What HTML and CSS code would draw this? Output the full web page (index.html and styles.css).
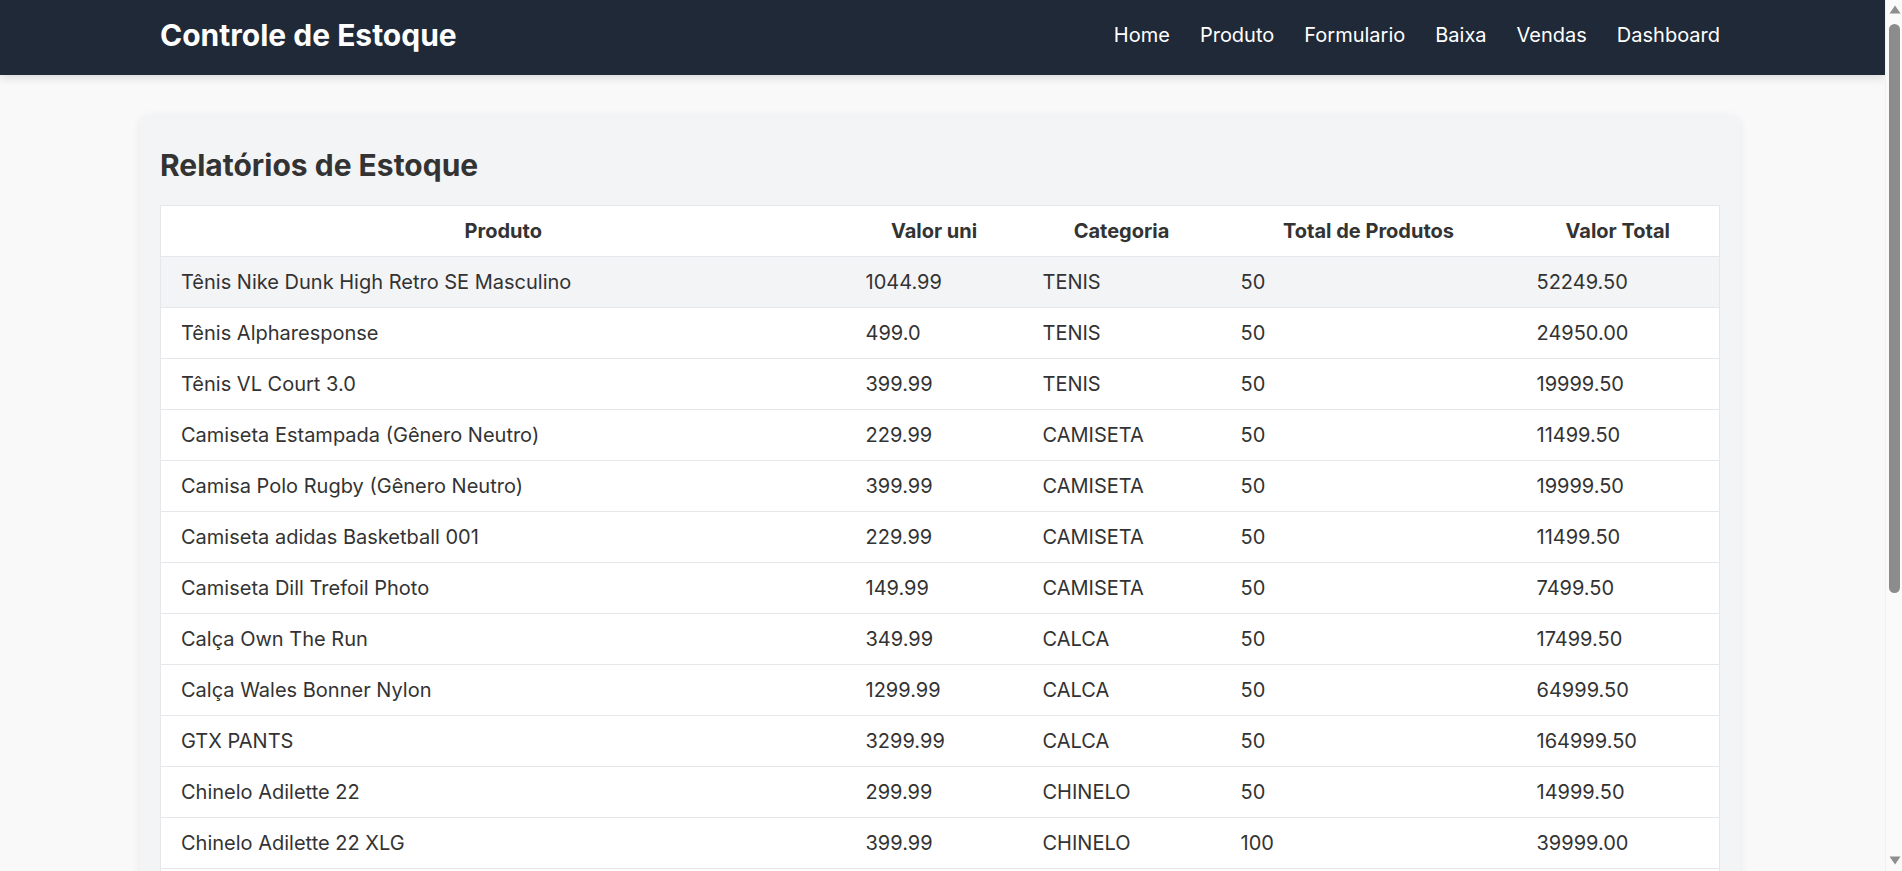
FILE: index.html
```html
<!DOCTYPE html>
<html lang="pt-BR">
<head>
<meta charset="utf-8">
<title>Relatórios de Estoque</title>
<link rel="stylesheet" href="styles.css">
</head>
<body>
<header class="topbar">
  <div class="topbar-inner">
    <h1 class="brand">Controle de Estoque</h1>
    <nav class="nav">
      <a href="#">Home</a>
      <a href="#">Produto</a>
      <a href="#">Formulario</a>
      <a href="#">Baixa</a>
      <a href="#">Vendas</a>
      <a href="#">Dashboard</a>
    </nav>
  </div>
</header>
<div class="page">
  <main class="card">
    <h2 class="card-title">Relatórios de Estoque</h2>
    <table class="report">
      <colgroup>
        <col class="c-prod"><col class="c-uni"><col class="c-cat"><col class="c-qtd"><col class="c-total">
      </colgroup>
      <thead>
        <tr><th>Produto</th><th>Valor uni</th><th>Categoria</th><th>Total de Produtos</th><th>Valor Total</th></tr>
      </thead>
      <tbody>
        <tr class="hover"><td>Tênis Nike Dunk High Retro SE Masculino</td><td>1044.99</td><td>TENIS</td><td>50</td><td>52249.50</td></tr>
        <tr><td>Tênis Alpharesponse</td><td>499.0</td><td>TENIS</td><td>50</td><td>24950.00</td></tr>
        <tr><td>Tênis VL Court 3.0</td><td>399.99</td><td>TENIS</td><td>50</td><td>19999.50</td></tr>
        <tr><td>Camiseta Estampada (Gênero Neutro)</td><td>229.99</td><td>CAMISETA</td><td>50</td><td>11499.50</td></tr>
        <tr><td>Camisa Polo Rugby (Gênero Neutro)</td><td>399.99</td><td>CAMISETA</td><td>50</td><td>19999.50</td></tr>
        <tr><td>Camiseta adidas Basketball 001</td><td>229.99</td><td>CAMISETA</td><td>50</td><td>11499.50</td></tr>
        <tr><td>Camiseta Dill Trefoil Photo</td><td>149.99</td><td>CAMISETA</td><td>50</td><td>7499.50</td></tr>
        <tr><td>Calça Own The Run</td><td>349.99</td><td>CALCA</td><td>50</td><td>17499.50</td></tr>
        <tr><td>Calça Wales Bonner Nylon</td><td>1299.99</td><td>CALCA</td><td>50</td><td>64999.50</td></tr>
        <tr><td>GTX PANTS</td><td>3299.99</td><td>CALCA</td><td>50</td><td>164999.50</td></tr>
        <tr><td>Chinelo Adilette 22</td><td>299.99</td><td>CHINELO</td><td>50</td><td>14999.50</td></tr>
        <tr><td>Chinelo Adilette 22 XLG</td><td>399.99</td><td>CHINELO</td><td>100</td><td>39999.00</td></tr>
        <tr><td>Chinelo Adilette Comfort</td><td>249.99</td><td>CHINELO</td><td>50</td><td>12499.50</td></tr>
        <tr><td>Chinelo Adilette Aqua</td><td>199.99</td><td>CHINELO</td><td>50</td><td>9999.50</td></tr>
        <tr><td>Boné Trefoil Baseball</td><td>179.99</td><td>BONE</td><td>50</td><td>8999.50</td></tr>
        <tr><td>Boné Essentials</td><td>149.99</td><td>BONE</td><td>50</td><td>7499.50</td></tr>
        <tr><td>Meia Cano Alto Trefoil</td><td>89.99</td><td>MEIA</td><td>50</td><td>4499.50</td></tr>
        <tr><td>Shorts Adicolor 3-Stripes</td><td>299.99</td><td>SHORTS</td><td>50</td><td>14999.50</td></tr>
        <tr><td>Shorts Own The Run</td><td>249.99</td><td>SHORTS</td><td>50</td><td>12499.50</td></tr>
      </tbody>
    </table>
  </main>
</div>
<div class="scrollbar" aria-hidden="true">
  <svg class="sb-arrow sb-up" width="12" height="9" viewBox="0 0 12 9"><path d="M6 0.5 L11.5 8.5 L0.5 8.5 Z" fill="#8e8e8e"/></svg>
  <div class="sb-thumb"></div>
  <div class="sb-space"></div>
  <svg class="sb-arrow sb-down" width="12" height="9" viewBox="0 0 12 9"><path d="M0.5 0.5 L11.5 0.5 L6 8.5 Z" fill="#8e8e8e"/></svg>
</div>
</body>
</html>
```

FILE: styles.css
```css
* { box-sizing: border-box; }

html {
  background: #f9f9f9;
}

body {
  margin: 0 17px 0 0;
  background: #f9f9f9;
  font-family: Inter, "Noto Sans", sans-serif;
  color: #333;
}

.topbar {
  position: relative;
  z-index: 1;
  background: #1f2937;
  height: 75px;
  padding-right: 5px;
  box-shadow: 0 2px 10px rgba(0, 0, 0, 0.15);
}

.topbar-inner {
  max-width: 1600px;
  height: 100%;
  margin: 0 auto;
  padding: 0 20px 5px;
  display: flex;
  align-items: center;
  justify-content: space-between;
}

.brand {
  margin: 0;
  color: #fff;
  font-size: 30px;
  font-weight: 700;
}

.nav {
  display: flex;
  gap: 30px;
}

.nav a {
  color: #fff;
  text-decoration: none;
  font-size: 20px;
}

.page {
  padding: 40px 5px 40px 0;
}

.card {
  max-width: 1600px;
  margin: 0 auto;
  padding: 20px 20px 24px;
  background: #f3f4f6;
  border-radius: 8px;
  box-shadow: 0 2px 10px rgba(0, 0, 0, 0.07);
}

.card-title {
  margin: 12px 0 22px;
  font-size: 30px;
  line-height: 36px;
  font-weight: 700;
  color: #333;
}

.report {
  width: 100%;
  table-layout: fixed;
  border-collapse: collapse;
  background: #fff;
  border: 1px solid #e5e7eb;
  font-size: 20px;
}

.c-prod { width: 685px; }
.c-uni { width: 177px; }
.c-cat { width: 198px; }
.c-qtd { width: 296px; }
.c-total { width: 203px; }

.report th,
.report td {
  height: 51px;
  padding: 0 20px;
  border-bottom: 1px solid #e5e7eb;
}

.report th {
  text-align: center;
  font-weight: 700;
}

.report td {
  text-align: left;
}

.report tr.hover td {
  background: #f3f4f6;
}

/* emulated browser scrollbar overlay */
.scrollbar {
  position: fixed;
  top: 0;
  right: 0;
  z-index: 5;
  width: 17px;
  height: 100vh;
  background: #fafafa;
  border-left: 1px solid #f1f1f1;
  display: flex;
  flex-direction: column;
  align-items: flex-start;
}

.sb-arrow {
  display: block;
  margin-left: 3px;
}

.sb-up {
  margin-top: 5px;
}

.sb-thumb {
  width: 11px;
  height: 569px;
  margin: 10px 0 0 3px;
  border-radius: 6px;
  background: #8c8c8c;
}

.sb-space {
  flex: 1;
}

.sb-down {
  margin-bottom: 6px;
}
```
